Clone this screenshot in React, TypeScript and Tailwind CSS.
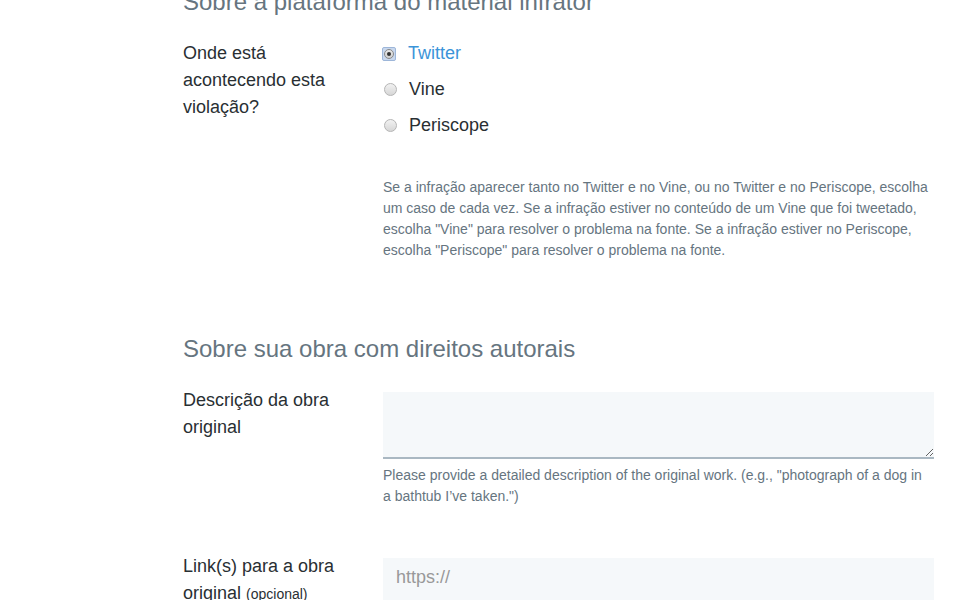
import React from "react";

function Radio({ checked }: { checked?: boolean }) {
  if (checked) {
    return (
      <span className="relative flex h-[14px] w-[14px] shrink-0 items-center justify-center rounded-[2px] border border-[#9db6d9] bg-[#c9d8ee]">
        <span className="flex h-[10px] w-[10px] items-center justify-center rounded-full border border-[#8a8a8a] bg-gradient-to-b from-[#e8e8e8] to-[#cfcfcf]">
          <span className="h-[4px] w-[4px] rounded-full bg-[#333]" />
        </span>
      </span>
    );
  }
  return (
    <span className="flex h-[14px] w-[14px] shrink-0 items-center justify-center">
      <span className="h-[13px] w-[13px] rounded-full border border-[#b5b5b5] bg-gradient-to-b from-[#f2f2f2] to-[#d6d6d6]" />
    </span>
  );
}

export default function App() {
  const font = { fontFamily: '"Liberation Sans", Arial, sans-serif' };
  return (
    <div className="min-h-[600px] w-[965px] overflow-hidden bg-white" style={font}>
      <div className="ml-[183px] w-[751px]">
        <h2 className="mt-[-13px] text-[24px] leading-[29px] font-normal text-[#66757f]">
          Sobre a plataforma do material infrator
        </h2>

        <div className="mt-[24px] flex">
          <div className="w-[200px] shrink-0 pr-4 text-[18px] leading-[27px] text-[#292f33]">
            Onde está acontecendo esta violação?
          </div>
          <div className="flex-1">
            <div className="flex flex-col gap-[9px] text-[18px] leading-[27px]">
              <label className="flex items-center gap-[12px]">
                <span className="-ml-[1px]">
                  <Radio checked />
                </span>
                <span className="text-[#3b94d9]">Twitter</span>
              </label>
              <label className="flex items-center gap-[12px]">
                <Radio />
                <span className="text-[#292f33]">Vine</span>
              </label>
              <label className="flex items-center gap-[12px]">
                <Radio />
                <span className="text-[#292f33]">Periscope</span>
              </label>
            </div>
            <p className="mt-[38px] text-[14px] leading-[21px] text-[#66757f]">
              Se a infração aparecer tanto no Twitter e no Vine, ou no Twitter e no Periscope, escolha
              um caso de cada vez. Se a infração estiver no conteúdo de um Vine que foi tweetado,
              escolha "Vine" para resolver o problema na fonte. Se a infração estiver no Periscope,
              escolha "Periscope" para resolver o problema na fonte.
            </p>
          </div>
        </div>

        <h2 className="mt-[73px] text-[24px] leading-[29px] font-normal text-[#66757f]">
          Sobre sua obra com direitos autorais
        </h2>

        <div className="mt-[24px] flex">
          <div className="w-[200px] shrink-0 pr-4 text-[18px] leading-[27px] text-[#292f33]">
            Descrição da obra original
          </div>
          <div className="flex-1 pt-[5px]">
            <textarea
              className="block h-[67px] w-full resize-y border-0 border-b-2 border-[#aab8c2] bg-[#f5f8fa] px-3 py-2 text-[18px] outline-none"
              style={font}
            />
            <p className="mt-[6px] pr-[12px] text-[14px] leading-[21px] text-[#66757f]">
              Please provide a detailed description of the original work. (e.g., "photograph of a dog in
              a bathtub I’ve taken.")
            </p>
          </div>
        </div>

        <div className="mt-[46px] flex">
          <div className="w-[200px] shrink-0 pr-4 text-[18px] leading-[27px] text-[#292f33]">
            Link(s) para a obra original <span className="text-[14px]">(opcional)</span>
          </div>
          <div className="flex-1 pt-[5px]">
            <input
              placeholder="https://"
              className="block h-[60px] w-full border-0 border-b-2 border-[#aab8c2] bg-[#f5f8fa] px-[13px] pb-[20px] text-[18px] text-[#292f33] outline-none placeholder:text-[#999]"
              style={font}
            />
          </div>
        </div>
      </div>
    </div>
  );
}
